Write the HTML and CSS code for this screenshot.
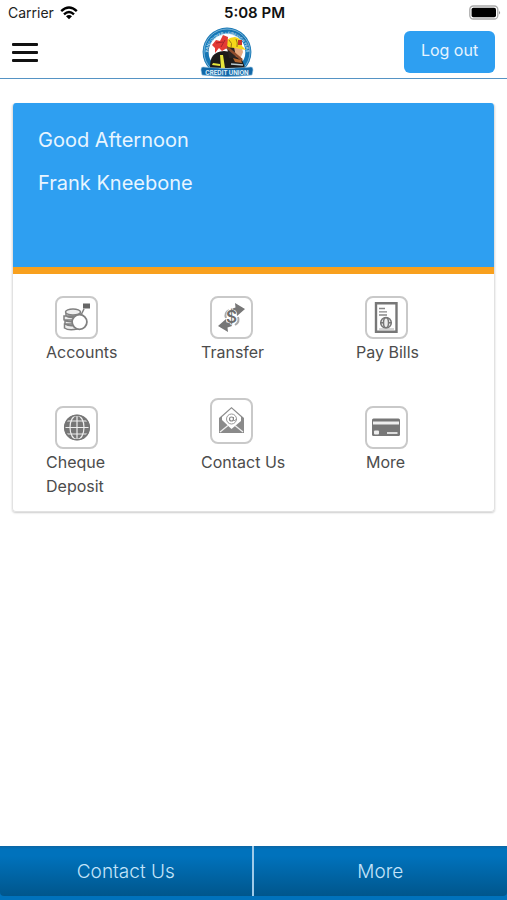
FILE: index.html
```
<!DOCTYPE html>
<html lang="en">
<head>
<meta charset="utf-8">
<meta name="viewport" content="width=device-width, initial-scale=1">
<title>Credit Union</title>
<link rel="stylesheet" href="styles.css">
</head>
<body>
<div class="status">
  <div class="carrier">Carrier
    <svg width="18" height="14" viewBox="0 0 18 14" aria-hidden="true"><g fill="none" stroke="#000" stroke-width="2.4"><path d="M1.2 5.2Q9-2 16.8 5.2"/><path d="M4 8.3Q9 3.8 14 8.3"/></g><path d="M6 10.3Q9 7.8 12 10.3L9 13.2Z"/></svg>
  </div>
  <div class="time">5:08 PM</div>
  <svg class="battery" width="32" height="16" viewBox="0 0 32 16" aria-hidden="true"><rect x=".8" y="1" width="28" height="13" rx="3.5" fill="#fff" stroke="#aaa" stroke-width="1.3"/><rect x="2.6" y="2.8" width="24.4" height="9.4" rx="1.8"/><path d="M30.2 5.5q1.6 2 0 4z" fill="#777"/></svg>
</div>
<header class="bar">
  <button class="menu" aria-label="Menu"><span></span><span></span><span></span></button>
  <svg class="logo" width="54" height="50" viewBox="0 0 54 50" role="img" aria-label="Firefighters Credit Union">
    <circle cx="27" cy="25" r="24.4" fill="#1676b4"/>
    <circle cx="27" cy="25" r="23" fill="none" stroke="#b9dcef" stroke-width=".6"/>
    <circle cx="27" cy="25" r="18.4" fill="#fff"/>
    <path id="arc" d="M9.5 35A19.3 19.3 0 1 1 44.5 35" fill="none"/>
    <text class="ring"><textPath href="#arc" startOffset="50%" text-anchor="middle">VANCOUVER • FIREFIGHTERS</textPath></text>
    <path d="M10 41C10 30 13 25 24 24L32 25 42 32 45 41Z" fill="#1d1b19"/>
    <path d="M26 15L37 18 40 24 38 31 29 31Z" fill="#292321"/>
    <path d="M34 20L42 21 43 25 41 30 36 30Z" fill="#e6a980"/>
    <path d="M25 20Q25 10 35 10Q42 11 42 19L46 23 35 21Z" fill="#f5d719"/>
    <path d="M29 13Q33 16 31 21M36 12Q38 16 37 20" fill="none" stroke="#977612"/>
    <path d="M38 13h4v5h-4z" fill="#c7342a"/>
    <path d="M23 17L42 33" stroke="#8e4c2c" stroke-width="2.4"/>
    <path d="M12 18L16 13 20 14 23 8 28 10 27 21 22 24 19 21 15 26 15 21Z" fill="#e33b35"/>
    <path d="M16 16L23 15M21 20L25 13" stroke="#a62329"/>
    <path d="M20 28L23 28 25 41 21 41ZM13 36L20 37 20 39 12 38Z" fill="#e6e53b"/>
    <path d="M33 31L41 33 42 36 35 35Z" fill="#b3652d"/>
    <path d="M31 37L43 38" stroke="#b9cbd2" stroke-width="1.5"/>
    <path d="M3 40Q27 43 51 40Q53 40 53 43L52 48Q27 51 2 48L1 43Q1 40 3 40Z" fill="#1268a8" stroke="#8ebfdd" stroke-width=".6"/>
    <text class="banner" x="27" y="47.5" text-anchor="middle">CREDIT UNION</text>
  </svg>
  <button class="logout">Log out</button>
</header>
<main>
  <section class="card">
    <div class="welcome"><p>Good Afternoon</p><p>Frank Kneebone</p></div>
    <nav class="tiles" aria-label="Services">
      <a href="#accounts"><span class="icon"><svg viewBox="0 0 43 43"><g fill="#eee" stroke="#808080" stroke-width="1.5"><path d="M9.5 28v4q4 3 13 1v-5zM10 24v4q4 3 13 1v-5zM9 20v4q4 3 13 1v-5zM11 16v4q4 3 14 0v-4z"/><ellipse cx="18" cy="16" rx="7.5" ry="3"/><path d="M26 19L29 13"/><circle cx="24.5" cy="26" r="7.4" fill="#fff" stroke-width="1.8"/></g><path d="M28 7.5h7v5h-7z" fill="#666"/></svg></span><span>Accounts</span></a>
      <a href="#transfer"><span class="icon"><svg viewBox="0 0 43 43"><path d="M25 7L35 13 27 20 26.5 16.500 23 17 21 13 25.5 11.5ZM18 36L8 30 16 23 16.500 26.500 20 26 22 30 17.500 31.500Z" fill="#777"/><path d="M19 14q-5 3-3 8M25 29q5-3 3-8" fill="none" stroke="#aaa" stroke-width="2"/><text class="dollar" x="21.5" y="27" text-anchor="middle">$</text></svg></span><span>Transfer</span></a>
      <a href="#bills"><span class="icon"><svg viewBox="0 0 43 43"><path d="M11 7.2h20.5v28.5H11z" fill="#fff" stroke="#777" stroke-width="2.4"/><path d="M14 12.5h6M14 15.8h8M14 19h8" stroke="#888" stroke-width="1.3"/><g fill="#eee" stroke="#777" stroke-width="1.5"><circle cx="21" cy="26.7" r="5.3"/><path d="M15.5 26.7h11M21 21.5v10.4"/><ellipse cx="21" cy="26.7" rx="2.5" ry="5"/></g><path d="M14 33h15" stroke="#aaa"/></svg></span><span>Pay Bills</span></a>
      <a href="#deposit"><span class="icon"><svg viewBox="0 0 43 43"><circle cx="22" cy="21.5" r="12.8" fill="#777"/><g fill="none" stroke="#eee" stroke-width="1.2"><path d="M9.5 21.5h25M22 9v25M11.5 15h21M11.5 28h21"/><ellipse cx="22" cy="21.5" rx="7" ry="12.2"/></g><circle cx="22" cy="21.5" r="12.3" fill="none" stroke="#777" stroke-width="1.5"/></svg></span><span>Cheque<br>Deposit</span></a>
      <a href="#contact" class="tall"><span class="icon"><svg viewBox="0 0 43 46"><path d="M9 20L21.5 9 34 20v15H9z" fill="#8a8a8a"/><path d="M12 22V19L21.5 10.5 31 19v4L21.5 31Z" fill="#fff"/><path d="M10 34L18 27.5M33 34L25 27.5" stroke="#eee" stroke-width="1.3"/><circle cx="21.5" cy="21" r="5" fill="none" stroke="#999" stroke-width="1"/><circle cx="21.5" cy="21" r="2" fill="none" stroke="#888" stroke-width="1.2"/><path d="M23.5 19v3q1 2 3-1" fill="none" stroke="#888"/></svg></span><span>Contact Us</span></a>
      <a href="#more" class="centred"><span class="icon"><svg viewBox="0 0 43 43"><rect x="7" y="12.5" width="28" height="17.5" rx="1.5" fill="#777"/><path d="M8 17h26" stroke="#eee" stroke-width="2.8"/><rect x="9" y="24.5" width="5" height="4" rx="1" fill="#eee"/><path d="M22 27h10.5" stroke="#ddd" stroke-width="1.8"/></svg></span><span>More</span></a>
    </nav>
  </section>
</main>
<footer><nav class="tabs" aria-label="Footer"><a href="#contact">Contact Us</a><a href="#more">More</a></nav></footer>
</body>
</html>
```
FILE: styles.css
```
* { box-sizing: border-box; }
body {
  margin: 0;
  min-height: 100vh;
  display: flex;
  flex-direction: column;
  background: #fff;
  color: #4c4c4c;
  font-family: Inter, "Liberation Sans", sans-serif;
  font-size: 16px;
  line-height: 24px;
}
a { color: inherit; text-decoration: none; }
button { border: 0; font: inherit; cursor: pointer; }
svg { display: block; }

.status {
  display: grid;
  grid-template-columns: 1fr auto 1fr;
  align-items: center;
  height: 26px;
  padding: 0 6px 0 8px;
  color: #222;
  font-size: 14px;
}
.carrier { display: flex; align-items: center; gap: 6px; }
.time { color: #111; font-size: 15px; font-weight: 600; }
.battery { justify-self: end; }

.bar {
  display: grid;
  grid-template-columns: 1fr auto 1fr;
  align-items: center;
  height: 53px;
  padding: 0 12px;
  border-bottom: 1px solid #5593c4;
}
.menu {
  display: flex;
  flex-direction: column;
  gap: 5px;
  width: 26px;
  padding: 0;
  background: none;
}
.menu span { height: 3px; background: #111; border-radius: 1px; }
.logo { margin-right: 54px; }
.logout {
  justify-self: end;
  width: 91px;
  height: 42px;
  padding: 0 0 4px;
  border-radius: 6px;
  background: #2e9ff1;
  color: #e6f4ff;
}
.ring { fill: #b9dcef; font-size: 4px; font-weight: 700; }
.banner { fill: #e3f2fb; font-size: 6px; font-weight: 700; }

main { flex: 1; padding: 24px 12px; }
.card {
  border: 1px solid #e2e2e2;
  border-top: 0;
  border-radius: 4px;
  box-shadow: 0 1px 2px #ccc;
  overflow: hidden;
}
.welcome {
  height: 171px;
  padding: 22px 25px;
  border-bottom: 7px solid #f8a01e;
  background: #2e9ff1;
  color: #e8f5ff;
  font-size: 20px;
  line-height: 30px;
}
.welcome p { margin: 0 0 13px; }
.tiles {
  display: grid;
  grid-template-columns: repeat(3, 1fr);
  gap: 22px 0;
  padding: 22px 8px 13px;
}
.tiles a {
  display: flex;
  flex-direction: column;
  min-height: 88px;
  padding: 0 25px;
}
.icon {
  width: 43px;
  height: 43px;
  margin: 0 0 1px 9px;
  border: 2px solid #c9c9c9;
  border-radius: 8px;
}
.icon svg { margin: -2px; width: 43px; height: 43px; }
.tall .icon, .tall .icon svg { height: 46px; }
.tall .icon { margin-top: -8px; margin-bottom: 6px; }
.centred span + span { margin-left: 10px; }
.dollar { fill: #6d6d6d; stroke: #fff; stroke-width: 1px; paint-order: stroke; font-size: 17px; font-weight: 600; }

footer { padding-bottom: 4px; background: #0072bc; }
.tabs {
  display: grid;
  grid-template-columns: 1fr 1fr;
  background: linear-gradient(#0b65a3 0, #0072bc 6%, #0072bc 20%, #00568c);
  border-radius: 0 0 4px 4px;
}
.tabs a {
  height: 50px;
  color: #c4e4fa;
  font-size: 19px;
  font-weight: 300;
  line-height: 52px;
  text-align: center;
}
.tabs a:first-child { border-right: 2px solid #9fcbe9; }
```
